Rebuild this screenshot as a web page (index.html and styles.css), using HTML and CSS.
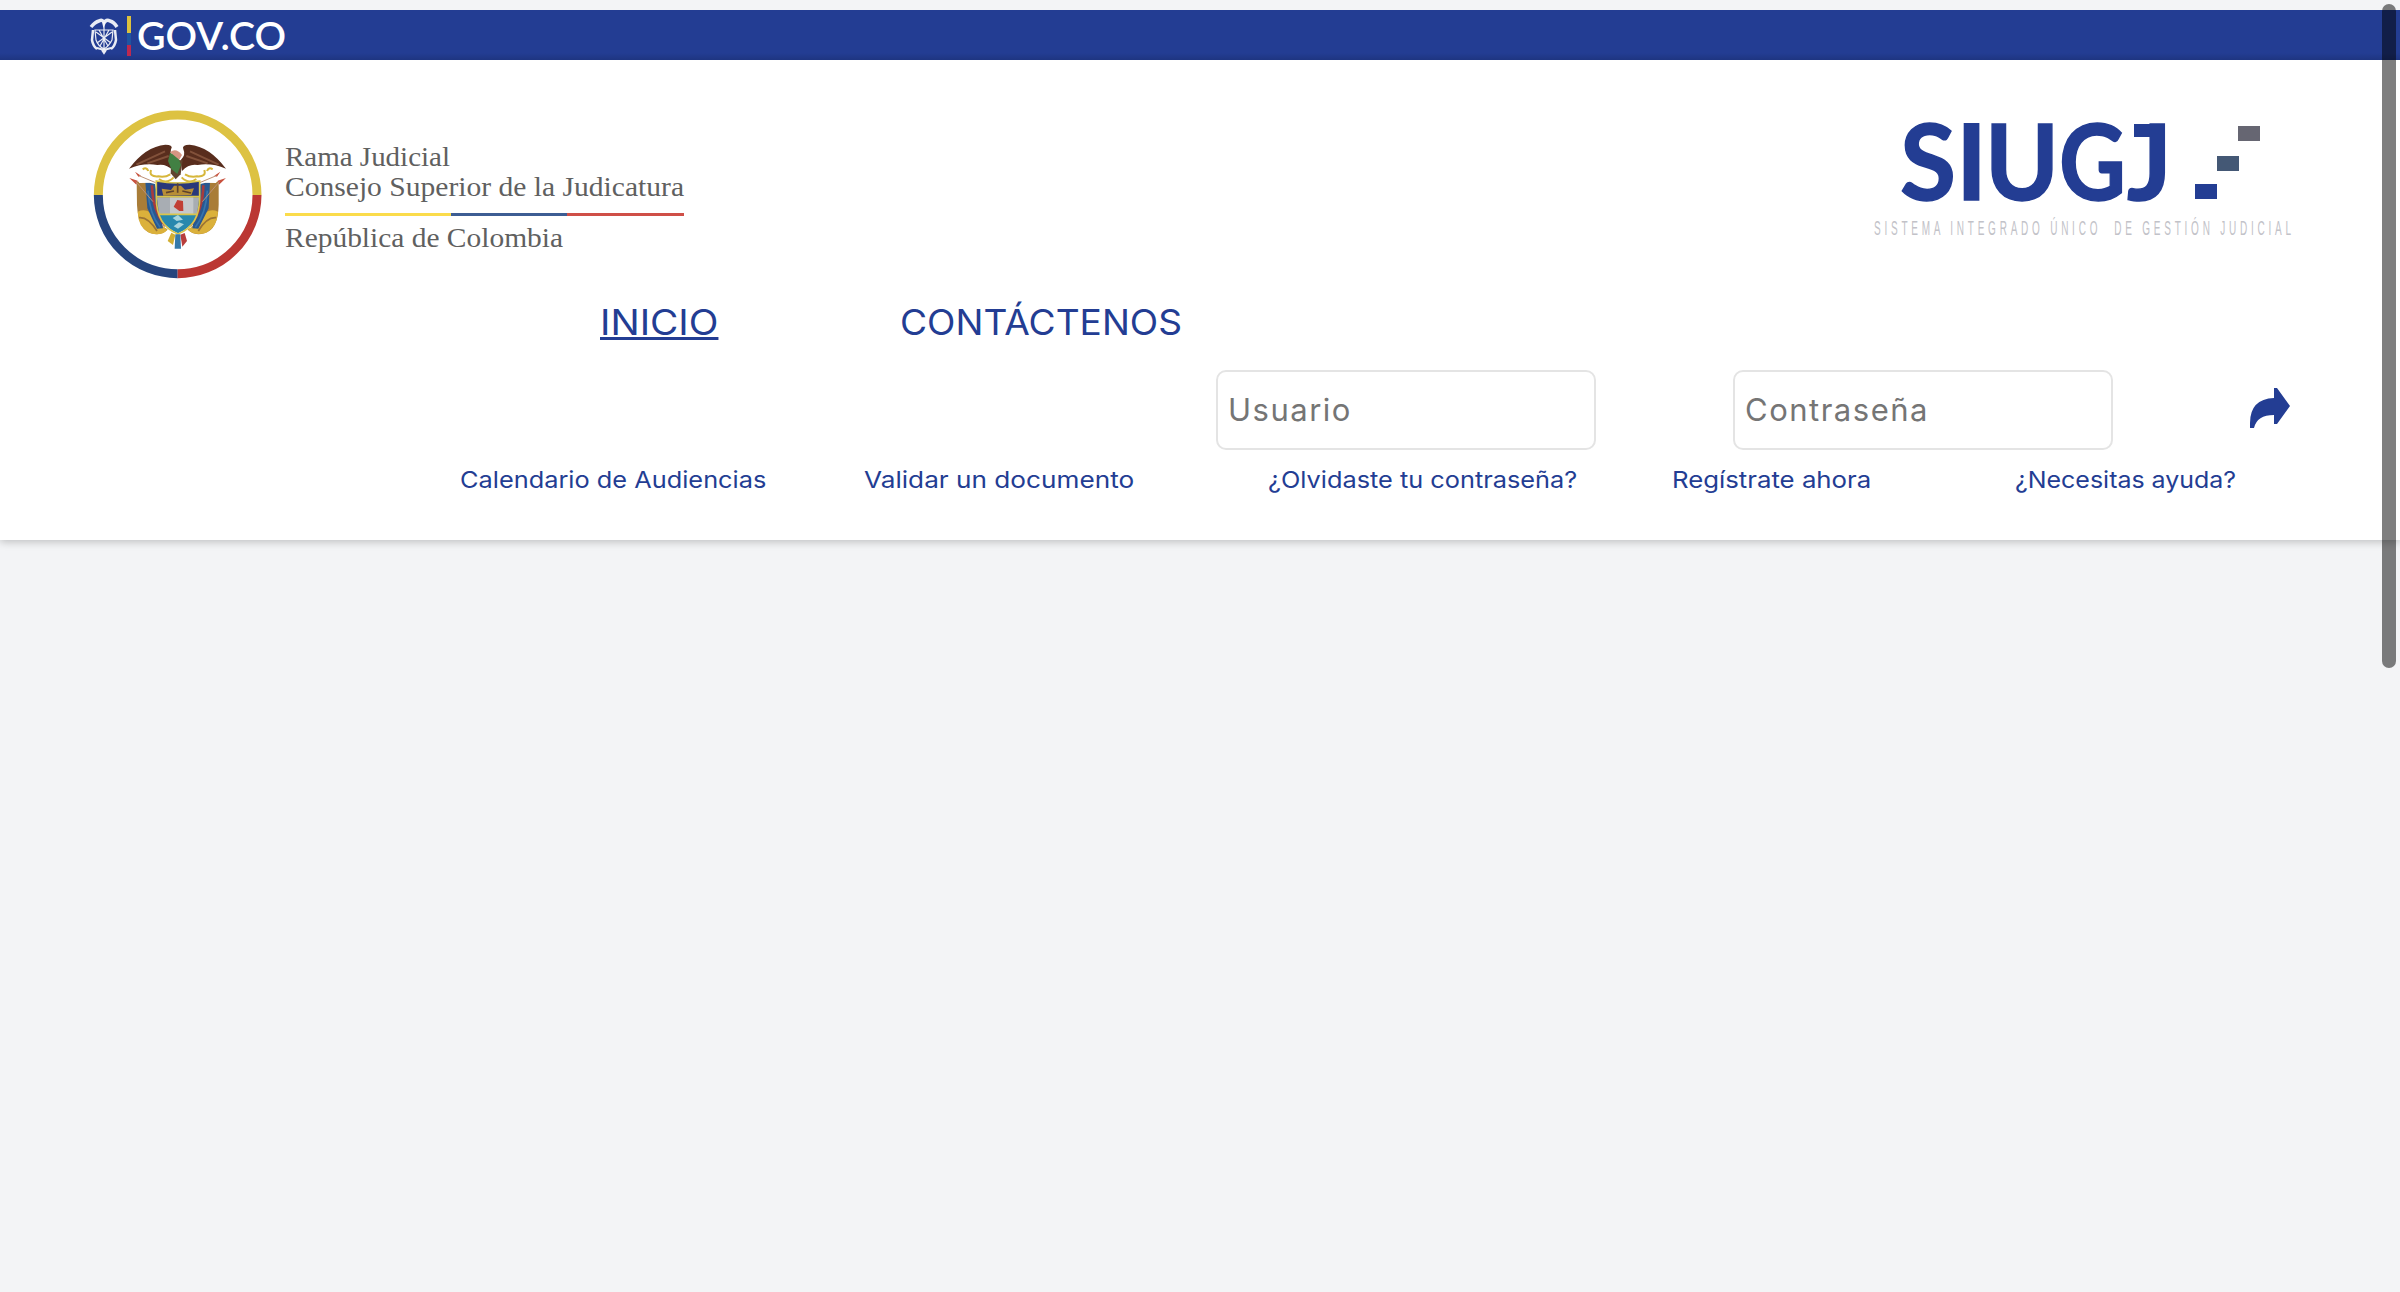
FILE: index.html
```html
<!DOCTYPE html>
<html lang="es">
<head>
<meta charset="utf-8">
<title>SIUGJ</title>
<link rel="stylesheet" href="styles.css">
</head>
<body>
<div class="govbar">
  <svg class="gov-logo" viewBox="0 0 240 50" role="img" aria-label="GOV.CO">
    <g fill="none" stroke="#fff" stroke-opacity=".9" stroke-width="1.2">
      <path d="M21 17Q25 12 29 11Q33 9 34 13Q36 9 40 11Q44 12 47 17" stroke-width="3.5"/>
      <path d="M23 20L22 30Q23 36 27 39M45 20L46 30Q45 36 41 39" stroke-width="2.5"/>
      <path d="M25 20H43L42 30Q39 36 34 39Q28 36 26 30ZM26 22L41 33M42 22L27 33M34 12V39M29 20L38 36M39 20L30 36"/>
      <path d="M27 38L34 40L41 38M32 40L34 43L36 40" stroke-width="2"/>
    </g>
    <path fill="#ddc13e" d="M57 6h4v17h-4z"/><path fill="#1e55a2" d="M57 23h4v12h-4z"/><path fill="#bd2950" d="M57 35h4v11h-4z"/>
    <text class="gov-text" x="67" y="40" textLength="149" lengthAdjust="spacingAndGlyphs">GOV.CO</text>
  </svg>
</div>
<header class="header">
  <div class="brands">
    <svg class="rama" viewBox="0 0 620 200" role="img" aria-label="Rama Judicial">
      <g transform="scale(.33333)">
        <g fill="none" stroke-width="27">
          <path stroke="#ddc242" d="M55 300A238 240 0 0 1 531 300"/>
          <path stroke="#27457d" d="M55 300A238 237 0 0 0 293 536"/>
          <path stroke="#bb3733" d="M531 300A238 237 0 0 1 293 536"/>
        </g>
        <path fill="#a97d38" d="M170 260L205 252L230 300L225 385L263 403Q245 424 213 415Q175 404 171 330ZM416 260L381 252L356 300L361 385L323 403Q341 424 373 415Q414 404 416 330Z"/>
        <path fill="#dbb13b" d="M173 350Q205 335 226 371L262 405Q242 426 207 413Q174 396 173 350ZM414 350Q384 335 361 371L324 405Q345 424 379 413Q412 396 414 350Z"/>
        <path fill="none" stroke="#9b7434" stroke-width="5" d="M177 368Q204 365 231 408M409 368Q381 365 355 408"/>
        <path fill="#285891" d="M196 260L225 267L249 400L231 401L202 340ZM390 260L361 267L337 400L355 401L386 340Z"/>
        <path fill="none" stroke="#a73b3d" stroke-width="8" d="M216 271Q217 345 256 393M370 271Q369 345 330 393"/>
        <path fill="none" stroke="#3774ac" stroke-width="5" d="M204 287Q208 356 240 397M382 287Q378 356 346 397"/>
        <path fill="#fff" d="M164 243L223 222L229 263L178 264ZM422 243L363 222L357 263L408 264Z"/>
        <path fill="#582d1d" d="M147 221Q197 154 256 149Q282 149 273 163Q269 179 282 197L279 226Q258 205 232 210Q190 203 147 221ZM438 221Q388 154 329 149Q304 149 310 163Q318 180 303 194L306 228Q327 205 353 210Q395 203 438 221Z"/>
        <path fill="none" stroke="#82513a" stroke-width="6" d="M169 209L255 169M202 205L266 183M416 209L330 169M383 205L319 183"/>
        <path fill="#60442e" d="M274 194L308 196L302 238L287 253L272 235Z"/>
        <path fill="#428043" d="M270 174L292 179L303 210L292 237L274 222L264 198Z"/>
        <path fill="#d69583" d="M270 172Q288 157 306 180L298 194Z"/>
        <g fill="none" stroke="#d7b73b" stroke-width="6"><path d="M188 223Q200 215 205 228M213 225Q206 246 235 244Q255 248 271 238M398 223Q386 215 381 228M373 225Q380 246 351 244Q331 248 315 238M237 252Q260 269 281 247M349 252Q326 269 305 247"/></g>
        <path fill="#c8513d" d="M165 230L183 242L175 245ZM421 230L403 242L411 245ZM148 249L173 257L169 269ZM438 249L413 257L417 269Z"/>
        <path fill="none" stroke="#bd9175" stroke-width="3" d="M177 242L227 263M168 260L219 320M409 242L359 263M418 260L367 320"/>
        <path fill="#29387a" d="M229 258Q293 269 359 258V310H229Z"/>
        <path fill="#a8adb3" d="M231 307H358L351 359H237Z"/>
        <path fill="#c5c8cb" d="M270 307H340V359H270Z"/>
        <path fill="#2788ad" d="M237 359H351Q333 400 294 415Q253 398 237 359Z"/>
        <path fill="none" stroke="#d9c54c" stroke-width="5" d="M229 258Q293 270 359 258V307Q360 392 294 417Q228 392 229 307ZM231 305H358M236 358H352"/>
        <path fill="#b88e36" d="M245 281L273 285L282 272L303 272L315 284L342 280L334 300L250 302Z"/>
        <path fill="none" stroke="#5d422e" stroke-width="5" d="M258 293L282 288M307 288L333 294M293 265V293"/>
        <path fill="#c13f35" d="M292 315L309 318L310 348H298L281 335Z"/>
        <path fill="#a8d5dd" d="M278 369L294 360L309 374L290 378ZM281 394L297 382L312 388L294 401Z"/>
        <path fill="#d2af33" d="M274 413L286 419L279 450L263 438Z"/><path fill="#b83e3c" d="M301 419L314 414L321 438L307 455Z"/><path fill="#357aab" d="M286 418H301L303 461H284Z"/>
      </g>
      <g class="rama-text">
        <text x="205" y="71" textLength="165" lengthAdjust="spacingAndGlyphs">Rama Judicial</text>
        <text x="205" y="101" textLength="399" lengthAdjust="spacingAndGlyphs">Consejo Superior de la Judicatura</text>
        <text x="205" y="151.500" textLength="278" lengthAdjust="spacingAndGlyphs">República de Colombia</text>
      </g>
      <path fill="#fbdc4b" d="M205 118h166v3h-166z"/><path fill="#3d5d93" d="M371 118h116v3h-116z"/><path fill="#cf4f47" d="M487 118h117v3h-117z"/>
    </svg>
    <svg class="siugj" viewBox="0 -25 450 175" role="img" aria-label="SIUGJ">
      <g class="siugj-text">
        <text x="40" y="100" textLength="56" lengthAdjust="spacingAndGlyphs">S</text>
        <text x="96" y="100">I</text>
        <text x="125" y="100" textLength="74" lengthAdjust="spacingAndGlyphs">U</text>
        <text x="199" y="100" textLength="67" lengthAdjust="spacingAndGlyphs">G</text>
        <text x="267" y="100" textLength="45" lengthAdjust="spacingAndGlyphs">J</text>
      </g>
      <path fill="#233d93" d="M274 24h22v13h-22zM335 84h22v15h-22z"/>
      <path fill="#445875" d="M357 56h22v15h-22z"/>
      <path fill="#666672" d="M378 26h22v15h-22z"/>
      <g transform="translate(14 135) scale(.5 1)"><text class="tagline" textLength="834" xml:space="preserve">SISTEMA INTEGRADO ÚNICO  DE GESTIÓN JUDICIAL</text></g>
    </svg>
  </div>
  <nav class="nav">
    <a><span class="current">INICIO</span></a>
    <a><span class="contact">CONTÁCTENOS</span></a>
  </nav>
  <form class="login">
    <input class="user" type="text" placeholder="Usuario">
    <input class="pass" type="password" placeholder="Contraseña">
    <svg class="arrow" viewBox="0 0 40 40" role="img" aria-label="Ingresar"><path fill="#233d93" d="M24 0H27L40 18L27 36H24V27Q7 27 4 40H0V35Q0 11 24 10Z"/></svg>
  </form>
  <div class="links">
    <a><span class="l1">Calendario de Audiencias</span></a>
    <a><span class="l2">Validar un documento</span></a>
    <a><span class="l3">¿Olvidaste tu contraseña?</span></a>
    <a><span class="l4">Regístrate ahora</span></a>
    <a><span class="l5">¿Necesitas ayuda?</span></a>
  </div>
</header>
<div class="scroll-thumb"></div>
</body>
</html>
```
FILE: styles.css
```css
* { box-sizing: border-box; }
body {
  margin: 0;
  padding-top: 10px;
  height: 1292px;
  overflow: hidden;
  background: #f3f4f6;
  color: #233d93;
  font-family: Inter, sans-serif;
}
.govbar {
  position: relative;
  z-index: 1;
  height: 50px;
  padding-left: 70px;
  background: linear-gradient(#233d93 0 43px, #1e3581);
}
.gov-logo { display: block; width: 240px; height: 50px; }
.gov-text { font: 600 38px Lato, sans-serif; fill: #fff; }
.header {
  position: relative;
  height: 480px;
  background: #fff;
  box-shadow: 0 2px 8px rgba(0, 0, 0, .22);
}
.brands {
  display: flex;
  justify-content: space-between;
  height: 235px;
  padding: 35px 90px 0 80px;
}
.rama { width: 620px; height: 200px; }
.siugj { width: 450px; height: 175px; margin-top: -20px; }
.rama-text { font: 28px "Liberation Serif", serif; fill: #606060; }
.siugj-text {
  font: 700 105px Lato, sans-serif;
  fill: #233d93;
  stroke: #233d93;
  stroke-width: 1.5px;
}
.tagline { font: 20px "Liberation Sans", sans-serif; fill: #c2c2c8; }
.nav span, .links span {
  display: inline-block;
  transform-origin: left;
}
.nav {
  display: grid;
  grid-template-columns: 300px 1fr;
  height: 75px;
  padding-left: 600px;
  align-items: start;
  font-size: 35px;
  line-height: 54px;
}
.nav .current {
  text-decoration: underline;
  text-decoration-thickness: 3px;
  text-underline-offset: 2px;
  transform: scaleX(1.108);
}
.contact { transform: scaleX(1.06); }
.login {
  display: flex;
  height: 80px;
  padding-left: 1216px;
}
.login input {
  width: 380px;
  height: 80px;
  padding: 0 0 2px 10px;
  border: 2px solid #e4e4e4;
  border-radius: 10px;
  background: #fff;
  font: 31px Inter, sans-serif;
  letter-spacing: 1.5px;
}
.login input::placeholder { color: #757575; opacity: 1; }
.login .pass { margin-left: 137px; }
.arrow { width: 40px; height: 40px; margin: 18px 0 0 137px; }
.links {
  display: grid;
  grid-template-columns: 404px 404px 404px 343px 1fr;
  padding: 14px 0 0 460px;
  font-size: 23px;
  line-height: 32px;
}
.l1 { transform: scaleX(1.102); }
.l2 { transform: scaleX(1.138); }
.l3 { transform: scaleX(1.101); }
.l4 { transform: scaleX(1.12); }
.l5 { transform: scaleX(1.085); }
.scroll-thumb {
  position: absolute;
  z-index: 2;
  left: 2382px;
  top: 4px;
  width: 14px;
  height: 664px;
  border-radius: 7px;
  background: rgba(0, 0, 0, .5);
}
```
